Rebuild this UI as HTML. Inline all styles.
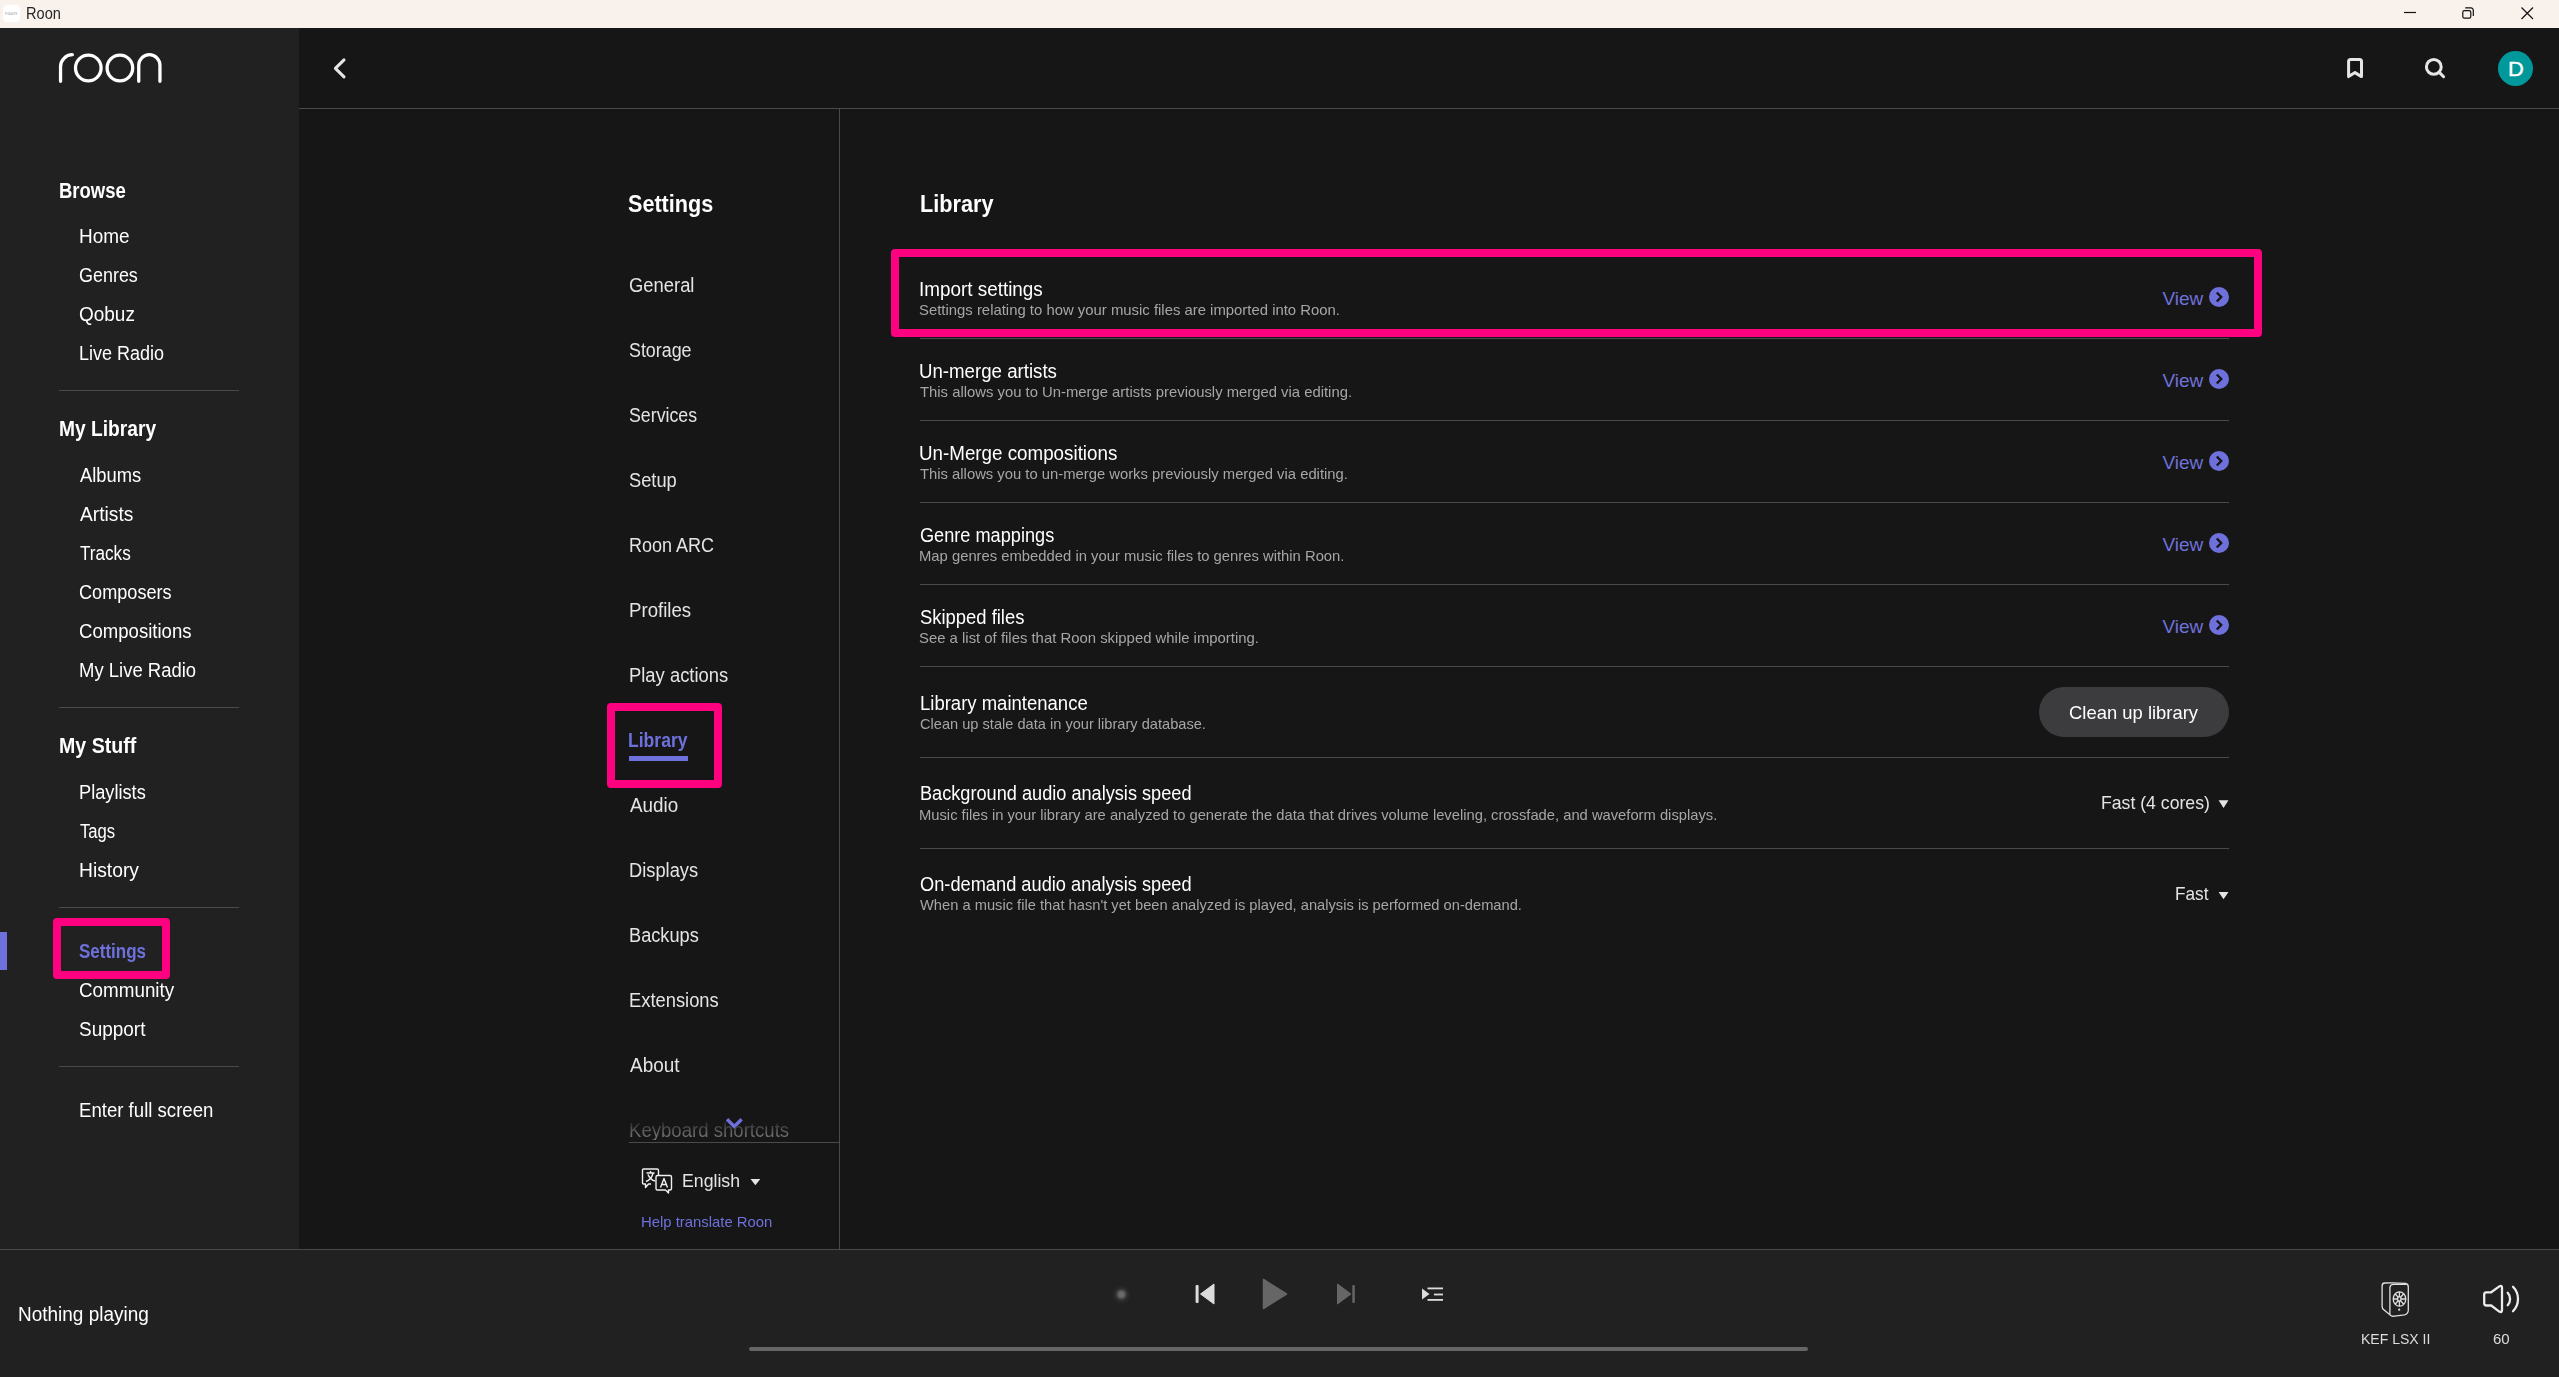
<!DOCTYPE html>
<html><head><meta charset="utf-8"><title>Roon</title>
<style>
html,body{margin:0;padding:0}
body{width:2559px;height:1377px;position:relative;overflow:hidden;background:#161616;font-family:"Liberation Sans",sans-serif}
.t{position:absolute;white-space:nowrap;line-height:1;transform-origin:0 0}
.r{position:absolute}
</style></head><body>
<!-- title bar -->
<div class="r" style="left:0;top:0;width:2559px;height:28px;background:#f9f1ec"></div>
<div class="r" style="left:2.5px;top:5px;width:17px;height:16.5px;background:#fff;border-radius:4px"></div>
<svg class="r" style="left:0;top:0" width="2559" height="28">
  <text x="5" y="14.8" font-family="Liberation Sans" font-size="5.6" fill="#9a9a9a" textLength="12">roon</text>
  <line x1="2404" y1="12.5" x2="2416" y2="12.5" stroke="#111" stroke-width="1.2"/>
  <rect x="2462.8" y="10.6" width="8" height="7.6" rx="1.6" fill="none" stroke="#111" stroke-width="1.2"/>
  <path d="M2465.2 7.9 H2471 a2.3 2.3 0 0 1 2.3 2.3 V16" fill="none" stroke="#111" stroke-width="1.2"/>
  <path d="M2521.5 7.5 L2533 19 M2533 7.5 L2521.5 19" stroke="#111" stroke-width="1.2"/>
</svg>
<!-- sidebar -->
<div class="r" style="left:0;top:28px;width:299px;height:1221px;background:#212121"></div>
<div class="r" style="left:59px;top:390px;width:180px;height:1px;background:#4a4a4e"></div>
<div class="r" style="left:59px;top:707px;width:180px;height:1px;background:#4a4a4e"></div>
<div class="r" style="left:59px;top:907px;width:180px;height:1px;background:#4a4a4e"></div>
<div class="r" style="left:59px;top:1066px;width:180px;height:1px;background:#4a4a4e"></div>
<div class="r" style="left:0;top:932px;width:7px;height:38px;background:#6e71dc"></div>
<div class="r" style="left:53px;top:918px;width:101px;height:45px;border:8px solid #ff0080;border-radius:4px"></div>
<!-- roon logo -->
<svg class="r" style="left:0;top:28px" width="299" height="80" viewBox="0 28 299 80">
  <g fill="none" stroke="#fff" stroke-width="3.3" stroke-linecap="round">
    <path d="M60.55 81.3 V66.7 A12 12 0 0 1 72.3 54.7"/>
    <circle cx="88.3" cy="68" r="12.8"/>
    <circle cx="119.9" cy="68" r="12.8"/>
    <path d="M138.75 81.3 V65.3 A10.6 10.6 0 0 1 159.95 65.3 V81.3"/>
  </g>
</svg>
<!-- header -->
<div class="r" style="left:299px;top:108px;width:2260px;height:1px;background:#4a4a4e"></div>
<svg class="r" style="left:299px;top:28px" width="2260" height="80" viewBox="299 28 2260 80">
  <path d="M344 59.9 L335.4 68.4 L344 76.9" fill="none" stroke="#e6e6e6" stroke-width="3" stroke-linecap="round" stroke-linejoin="round"/>
  <path d="M2348.6 76.6 V61.5 a2 2 0 0 1 2 -2 H2359.5 a2 2 0 0 1 2 2 V76.6 L2355 72.6 Z" fill="none" stroke="#e6e6e6" stroke-width="3" stroke-linejoin="round"/>
  <circle cx="2433.8" cy="66.9" r="7.4" fill="none" stroke="#e6e6e6" stroke-width="3"/>
  <path d="M2439.3 72.4 L2443.6 76.7" stroke="#e6e6e6" stroke-width="3" stroke-linecap="round"/>
  <circle cx="2515.5" cy="68.5" r="17.5" fill="#00989b"/>
  <text x="2515.8" y="76.4" text-anchor="middle" font-family="Liberation Sans" font-size="20.5" fill="#fff" stroke="#fff" stroke-width="0.35" transform="translate(2515.8 0) scale(1.07 1) translate(-2515.8 0)">D</text>
</svg>
<!-- settings nav -->
<div class="r" style="left:839px;top:109px;width:1px;height:1140px;background:#4a4a4e"></div>
<div class="r" style="left:607px;top:703px;width:99px;height:69px;border:8px solid #ff0080;border-radius:4px"></div>
<div class="r" style="left:629px;top:756px;width:59px;height:5px;background:#6e71dc"></div>
<div class="r" style="left:629px;top:1142px;width:210px;height:1px;background:#4a4a4e"></div>
<svg class="r" style="left:600px;top:1110px" width="239" height="130" viewBox="600 1110 239 130">
  <path d="M727 1119.3 L734.3 1126.5 L741.6 1119.3" fill="none" stroke="#6e71dc" stroke-width="3.4"/>
  <g fill="none" stroke="#f0f0f0" stroke-width="1.4" stroke-linejoin="round">
    <path d="M643.5 1169 H657 a1.5 1.5 0 0 1 1.5 1.5 V1175.5 M651 1184 H648.5 L645.5 1187.5 V1184 H643.5 a1 1 0 0 1 -1 -1 V1170 a1 1 0 0 1 1 -1"/>
    <path d="M657.5 1175.5 H670 a1.5 1.5 0 0 1 1.5 1.5 V1188.5 a1.5 1.5 0 0 1 -1.5 1.5 H668.5 V1193 L665.5 1190 H657.5 a1.5 1.5 0 0 1 -1.5 -1.5 V1177 a1.5 1.5 0 0 1 1.5 -1.5 Z"/>
    <path d="M646.5 1173 H654.5 M650.5 1171 V1173 M653 1173.5 Q651 1180 646 1181.5 M648 1174.5 Q650 1179.5 655 1181"/>
    <path d="M660.5 1187.5 L664 1178.5 L667.5 1187.5 M661.7 1184.5 H666.3"/>
  </g>
  <path d="M750.5 1179 H760.3 L755.4 1185.3 Z" fill="#e4e4e4"/>
</svg>
<!-- content -->
<div class="r" style="left:891px;top:249px;width:1355px;height:72px;border:8px solid #ff0080;border-radius:4px"></div>
<div class="r" style="left:920px;top:338px;width:1309px;height:1px;background:#4a4a4e"></div>
<div class="r" style="left:920px;top:420px;width:1309px;height:1px;background:#4a4a4e"></div>
<div class="r" style="left:920px;top:502px;width:1309px;height:1px;background:#4a4a4e"></div>
<div class="r" style="left:920px;top:584px;width:1309px;height:1px;background:#4a4a4e"></div>
<div class="r" style="left:920px;top:666px;width:1309px;height:1px;background:#4a4a4e"></div>
<div class="r" style="left:920px;top:757px;width:1309px;height:1px;background:#4a4a4e"></div>
<div class="r" style="left:920px;top:848px;width:1309px;height:1px;background:#4a4a4e"></div>
<svg class="r" style="left:2150px;top:270px" width="100" height="650" viewBox="2150 270 100 650">
  <g id="vw">
    <circle cx="2219" cy="297" r="10" fill="#6e71dc"/>
    <path d="M2216.8 292.5 L2221.2 297 L2216.8 301.5" fill="none" stroke="#161616" stroke-width="2.4"/>
  </g>
  <use href="#vw" y="82"/><use href="#vw" y="164"/><use href="#vw" y="246"/><use href="#vw" y="328"/>
  <path d="M2218.6 800.3 H2228.5 L2223.55 807.9 Z" fill="#e4e4e4"/>
  <path d="M2218.6 891.9 H2228.5 L2223.55 899.3 Z" fill="#e4e4e4"/>
</svg>
<div class="r" style="left:2039px;top:687px;width:190px;height:50px;border-radius:25px;background:#3c3c3e"></div>
<!-- bottom bar -->
<div class="r" style="left:0;top:1249px;width:2559px;height:128px;background:#212121"></div>
<div class="r" style="left:0;top:1249px;width:2559px;height:1px;background:#4a4a4e"></div>
<div class="r" style="left:749px;top:1347px;width:1059px;height:4px;border-radius:2px;background:#666"></div>
<svg class="r" style="left:1080px;top:1260px" width="400" height="80" viewBox="1080 1260 400 80">
  <defs><filter id="bl1" x="-1" y="-1" width="3" height="3"><feGaussianBlur stdDeviation="0.8"/></filter><filter id="bl2" x="-1" y="-1" width="3" height="3"><feGaussianBlur stdDeviation="2"/></filter></defs>
  <circle cx="1121.4" cy="1294.5" r="6.5" fill="#3a3a3a" filter="url(#bl2)"/><circle cx="1121.4" cy="1294.5" r="4" fill="#6a6a6a" filter="url(#bl1)"/>
  <rect x="1195.6" y="1285" width="3" height="18" rx="1" fill="#dcdcdc"/>
  <path d="M1214 1284 V1304 L1200.5 1294 Z" fill="#dcdcdc" stroke="#dcdcdc" stroke-width="1" stroke-linejoin="round"/>
  <path d="M1263.5 1279.5 V1308.5 L1286.5 1294 Z" fill="#666" stroke="#666" stroke-width="1.5" stroke-linejoin="round"/>
  <path d="M1337.5 1284 V1304 L1351 1294 Z" fill="#666" stroke="#666" stroke-width="1" stroke-linejoin="round"/>
  <rect x="1352.3" y="1285" width="2.5" height="18" rx="1" fill="#666"/>
  <path d="M1422 1288.5 V1299.5 L1429.5 1294 Z" fill="#dcdcdc"/>
  <rect x="1427.5" y="1287.5" width="15.5" height="1.8" fill="#dcdcdc"/>
  <rect x="1434" y="1293.6" width="9" height="1.8" fill="#dcdcdc"/>
  <rect x="1427.5" y="1299" width="15.5" height="1.8" fill="#dcdcdc"/>
</svg>
<svg class="r" style="left:2370px;top:1275px" width="160" height="50" viewBox="2370 1275 160 50">
  <g fill="none" stroke="#e0e0e0" stroke-width="1.3" stroke-linejoin="round">
    <path d="M2384.5 1283 Q2395 1282.4 2405.5 1283.4 Q2408.3 1283.9 2408.3 1287 V1310.5 Q2408 1314 2404.5 1314.8 L2394.5 1316.2 Q2392.2 1316.5 2390.5 1315.2 L2383.8 1309.8 Q2382.1 1308.5 2382.1 1306.5 V1286 Q2382.1 1283.2 2384.5 1283 Z"/>
    <path d="M2406.5 1284.3 H2393 Q2389.9 1284.6 2389.9 1287.8 V1314.5"/>
    <ellipse cx="2399.5" cy="1299" rx="6.3" ry="7.2"/>
    <ellipse cx="2399.3" cy="1299" rx="1.7" ry="2.1"/>
    <path d="M2399.4 1291.8 V1296.9 M2399.4 1301.1 V1306.2 M2393.2 1299 H2397.6 M2401 1299 H2405.8 M2395 1293.8 L2398.2 1297.3 M2400.5 1300.8 L2403.8 1304.3 M2403.8 1293.8 L2400.5 1297.3 M2398.2 1300.8 L2395 1304.3"/>
  </g>
  <circle cx="2399.2" cy="1309.7" r="1.1" fill="#e0e0e0"/>
  <g fill="none" stroke="#ececec" stroke-width="2.3" stroke-linejoin="round" stroke-linecap="round">
    <path d="M2486.4 1292.3 H2491.2 L2499.3 1286.4 Q2502 1284.8 2502 1288 V1310 Q2502 1313.2 2499.3 1311.6 L2491.2 1305.5 H2486.4 Q2484.2 1305.5 2484.2 1303.3 V1294.5 Q2484.2 1292.3 2486.4 1292.3 Z"/>
    <path d="M2507.7 1292.8 A9.2 9.2 0 0 1 2507.7 1305.2"/>
    <path d="M2513 1286.8 A17.4 17.4 0 0 1 2513 1311.2"/>
  </g>
</svg>

<div class="t" style="left:59.1px;top:179.5px;font-size:22px;color:#ffffff;font-weight:700;transform:scaleX(0.841);">Browse</div>
<div class="t" style="left:78.7px;top:226.2px;font-size:20px;color:#ffffff;transform:scaleX(0.948);">Home</div>
<div class="t" style="left:78.7px;top:265.2px;font-size:20px;color:#ffffff;transform:scaleX(0.897);">Genres</div>
<div class="t" style="left:78.7px;top:304.2px;font-size:20px;color:#ffffff;transform:scaleX(0.949);">Qobuz</div>
<div class="t" style="left:78.7px;top:343.2px;font-size:20px;color:#ffffff;transform:scaleX(0.900);">Live Radio</div>
<div class="t" style="left:58.6px;top:418.4px;font-size:22px;color:#ffffff;font-weight:700;transform:scaleX(0.873);">My Library</div>
<div class="t" style="left:79.6px;top:465.1px;font-size:20px;color:#ffffff;transform:scaleX(0.918);">Albums</div>
<div class="t" style="left:79.6px;top:504.1px;font-size:20px;color:#ffffff;transform:scaleX(0.960);">Artists</div>
<div class="t" style="left:79.6px;top:543.1px;font-size:20px;color:#ffffff;transform:scaleX(0.856);">Tracks</div>
<div class="t" style="left:78.7px;top:582.1px;font-size:20px;color:#ffffff;transform:scaleX(0.906);">Composers</div>
<div class="t" style="left:78.7px;top:621.1px;font-size:20px;color:#ffffff;transform:scaleX(0.929);">Compositions</div>
<div class="t" style="left:78.7px;top:660.1px;font-size:20px;color:#ffffff;transform:scaleX(0.924);">My Live Radio</div>
<div class="t" style="left:58.6px;top:735.4px;font-size:22px;color:#ffffff;font-weight:700;transform:scaleX(0.890);">My Stuff</div>
<div class="t" style="left:78.7px;top:782.1px;font-size:20px;color:#ffffff;transform:scaleX(0.910);">Playlists</div>
<div class="t" style="left:79.6px;top:821.1px;font-size:20px;color:#ffffff;transform:scaleX(0.833);">Tags</div>
<div class="t" style="left:78.6px;top:860.1px;font-size:20px;color:#ffffff;transform:scaleX(0.963);">History</div>
<div class="t" style="left:79.4px;top:940.9px;font-size:20px;color:#6e71dc;font-weight:700;transform:scaleX(0.850);">Settings</div>
<div class="t" style="left:78.7px;top:979.9px;font-size:20px;color:#ffffff;transform:scaleX(0.941);">Community</div>
<div class="t" style="left:78.7px;top:1018.9px;font-size:20px;color:#ffffff;transform:scaleX(0.948);">Support</div>
<div class="t" style="left:78.7px;top:1099.7px;font-size:20px;color:#ffffff;transform:scaleX(0.930);">Enter full screen</div>
<div class="t" style="left:628.4px;top:192.0px;font-size:24px;color:#ffffff;font-weight:700;transform:scaleX(0.900);">Settings</div>
<div class="t" style="left:628.7px;top:275.2px;font-size:20px;color:#e4e4e4;transform:scaleX(0.920);">General</div>
<div class="t" style="left:628.7px;top:340.2px;font-size:20px;color:#e4e4e4;transform:scaleX(0.893);">Storage</div>
<div class="t" style="left:628.7px;top:405.2px;font-size:20px;color:#e4e4e4;transform:scaleX(0.888);">Services</div>
<div class="t" style="left:628.7px;top:470.2px;font-size:20px;color:#e4e4e4;transform:scaleX(0.914);">Setup</div>
<div class="t" style="left:628.7px;top:535.2px;font-size:20px;color:#e4e4e4;transform:scaleX(0.900);">Roon ARC</div>
<div class="t" style="left:628.7px;top:600.2px;font-size:20px;color:#e4e4e4;transform:scaleX(0.932);">Profiles</div>
<div class="t" style="left:628.7px;top:665.2px;font-size:20px;color:#e4e4e4;transform:scaleX(0.920);">Play actions</div>
<div class="t" style="left:628.4px;top:730.2px;font-size:20px;color:#6e71dc;font-weight:700;transform:scaleX(0.878);">Library</div>
<div class="t" style="left:629.6px;top:795.2px;font-size:20px;color:#e4e4e4;transform:scaleX(0.941);">Audio</div>
<div class="t" style="left:628.7px;top:860.2px;font-size:20px;color:#e4e4e4;transform:scaleX(0.914);">Displays</div>
<div class="t" style="left:628.7px;top:925.2px;font-size:20px;color:#e4e4e4;transform:scaleX(0.909);">Backups</div>
<div class="t" style="left:628.7px;top:990.2px;font-size:20px;color:#e4e4e4;transform:scaleX(0.917);">Extensions</div>
<div class="t" style="left:629.6px;top:1055.2px;font-size:20px;color:#e4e4e4;transform:scaleX(0.947);">About</div>
<div class="t" style="left:628.9px;top:1120.3px;font-size:20px;color:transparent;transform:scaleX(0.929);background:linear-gradient(#161616 0%,#3c3c3c 25%,#707070 80%,#777 100%);-webkit-background-clip:text;background-clip:text;">Keyboard shortcuts</div>
<div class="t" style="left:681.9px;top:1170.9px;font-size:19px;color:#e4e4e4;transform:scaleX(0.931);">English</div>
<div class="t" style="left:641.0px;top:1213.5px;font-size:15px;color:#6e71dc;transform:scaleX(0.991);">Help translate Roon</div>
<div class="t" style="left:919.6px;top:192.0px;font-size:24px;color:#ffffff;font-weight:700;transform:scaleX(0.904);">Library</div>
<div class="t" style="left:919.4px;top:279.5px;font-size:19.5px;color:#ffffff;transform:scaleX(0.968);">Import settings</div>
<div class="t" style="left:919.4px;top:302.3px;font-size:15px;color:#a6a6a6;transform:scaleX(0.992);">Settings relating to how your music files are imported into Roon.</div>
<div class="t" style="left:2162.5px;top:288.6px;font-size:19px;color:#6e71dc;">View</div>
<div class="t" style="left:919.4px;top:361.5px;font-size:19.5px;color:#ffffff;transform:scaleX(0.957);">Un-merge artists</div>
<div class="t" style="left:920.4px;top:384.3px;font-size:15px;color:#a6a6a6;transform:scaleX(0.989);">This allows you to Un-merge artists previously merged via editing.</div>
<div class="t" style="left:2162.5px;top:370.6px;font-size:19px;color:#6e71dc;">View</div>
<div class="t" style="left:919.4px;top:443.5px;font-size:19.5px;color:#ffffff;transform:scaleX(0.963);">Un-Merge compositions</div>
<div class="t" style="left:920.4px;top:466.3px;font-size:15px;color:#a6a6a6;transform:scaleX(0.987);">This allows you to un-merge works previously merged via editing.</div>
<div class="t" style="left:2162.5px;top:452.6px;font-size:19px;color:#6e71dc;">View</div>
<div class="t" style="left:919.5px;top:525.5px;font-size:19.5px;color:#ffffff;transform:scaleX(0.931);">Genre mappings</div>
<div class="t" style="left:919.4px;top:548.3px;font-size:15px;color:#a6a6a6;transform:scaleX(0.987);">Map genres embedded in your music files to genres within Roon.</div>
<div class="t" style="left:2162.5px;top:534.6px;font-size:19px;color:#6e71dc;">View</div>
<div class="t" style="left:919.5px;top:607.5px;font-size:19.5px;color:#ffffff;transform:scaleX(0.944);">Skipped files</div>
<div class="t" style="left:919.4px;top:630.3px;font-size:15px;color:#a6a6a6;transform:scaleX(0.992);">See a list of files that Roon skipped while importing.</div>
<div class="t" style="left:2162.5px;top:616.6px;font-size:19px;color:#6e71dc;">View</div>
<div class="t" style="left:919.5px;top:693.5px;font-size:19.5px;color:#ffffff;transform:scaleX(0.949);">Library maintenance</div>
<div class="t" style="left:920.4px;top:716.3px;font-size:15px;color:#a6a6a6;transform:scaleX(0.974);">Clean up stale data in your library database.</div>
<div class="t" style="left:919.5px;top:784.0px;font-size:19.5px;color:#ffffff;transform:scaleX(0.931);">Background audio analysis speed</div>
<div class="t" style="left:919.4px;top:806.8px;font-size:15px;color:#a6a6a6;transform:scaleX(0.983);">Music files in your library are analyzed to generate the data that drives volume leveling, crossfade, and waveform displays.</div>
<div class="t" style="left:919.5px;top:874.5px;font-size:19.5px;color:#ffffff;transform:scaleX(0.935);">On-demand audio analysis speed</div>
<div class="t" style="left:920.4px;top:897.3px;font-size:15px;color:#a6a6a6;transform:scaleX(0.979);">When a music file that hasn't yet been analyzed is played, analysis is performed on-demand.</div>
<div class="t" style="left:2068.9px;top:702.9px;font-size:19px;color:#ffffff;transform:scaleX(0.970);">Clean up library</div>
<div class="t" style="left:2100.5px;top:792.9px;font-size:19px;color:#e4e4e4;transform:scaleX(0.929);">Fast (4 cores)</div>
<div class="t" style="left:2174.7px;top:883.9px;font-size:19px;color:#e4e4e4;transform:scaleX(0.906);">Fast</div>
<div class="t" style="left:18.4px;top:1304.4px;font-size:20px;color:#ffffff;transform:scaleX(0.949);">Nothing playing</div>
<div class="t" style="left:2360.6px;top:1331.0px;font-size:15.5px;color:#dddddd;transform:scaleX(0.905);">KEF LSX II</div>
<div class="t" style="left:2492.8px;top:1331.0px;font-size:15.5px;color:#dddddd;transform:scaleX(0.971);">60</div>
<div class="t" style="left:26.1px;top:5.1px;font-size:16.3px;color:#262626;transform:scaleX(0.895);">Roon</div>
</body></html>
